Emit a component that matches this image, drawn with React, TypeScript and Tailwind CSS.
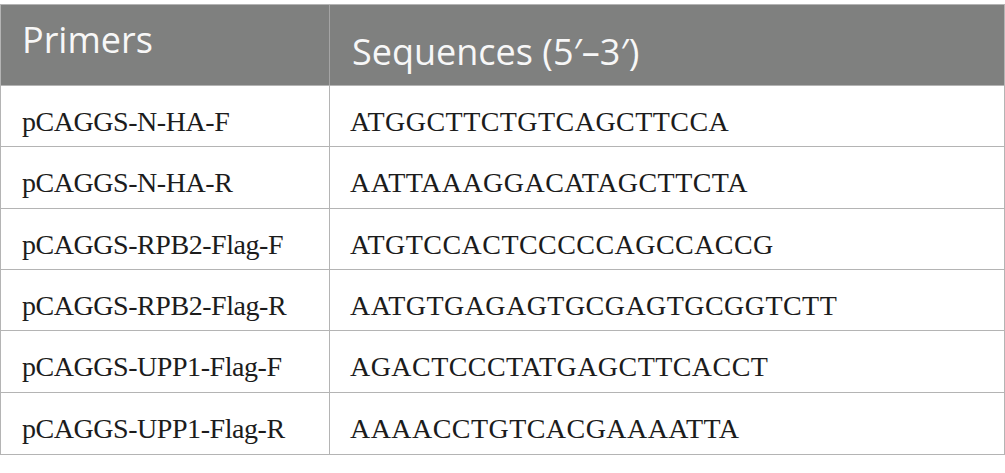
import React from 'react';

const rows = [
  { name: 'pCAGGS-N-HA-F', seq: 'ATGGCTTCTGTCAGCTTCCA', h: 'h-[61px]' },
  { name: 'pCAGGS-N-HA-R', seq: 'AATTAAAGGACATAGCTTCTA', h: 'h-[62px]' },
  { name: 'pCAGGS-RPB2-Flag-F', seq: 'ATGTCCACTCCCCCAGCCACCG', h: 'h-[61px]' },
  { name: 'pCAGGS-RPB2-Flag-R', seq: 'AATGTGAGAGTGCGAGTGCGGTCTT', h: 'h-[61px]' },
  { name: 'pCAGGS-UPP1-Flag-F', seq: 'AGACTCCCTATGAGCTTCACCT', h: 'h-[62px]' },
  { name: 'pCAGGS-UPP1-Flag-R', seq: 'AAAACCTGTCACGAAAATTA', h: 'h-[61px]' },
];

export default function App() {
  return (
    <div className="w-[1005px] h-[473px] bg-white pt-[4px]">
      <div className="border border-[#b4b4b4]">
        {/* header */}
        <div className="flex h-[81px] bg-[#7f807f] border-b border-[#b4b4b4] text-[36px] leading-[36px] text-[#f7f7f7] font-['Open_Sans',sans-serif]">
          <div className="w-[329px] shrink-0 border-r border-[#a4a4a4] pl-[21px] pt-[17px]">
            Primers
          </div>
          <div className="flex-1 pl-[22px] pt-[29px]">Sequences (5′–3′)</div>
        </div>

        {rows.map((r, i) => (
          <div
            key={r.name}
            className={`flex ${r.h} ${i < rows.length - 1 ? 'border-b' : ''} border-[#b4b4b4] text-[28px] leading-[28px] text-[#1c1c1c] font-['Liberation_Serif',serif]`}
          >
            <div className="w-[329px] shrink-0 border-r border-[#b4b4b4] pl-[21px] pt-[22px] tracking-[-0.45px]">
              {r.name}
            </div>
            <div className="flex-1 pl-[20px] pt-[22px] tracking-[0.45px]">{r.seq}</div>
          </div>
        ))}
      </div>
    </div>
  );
}
